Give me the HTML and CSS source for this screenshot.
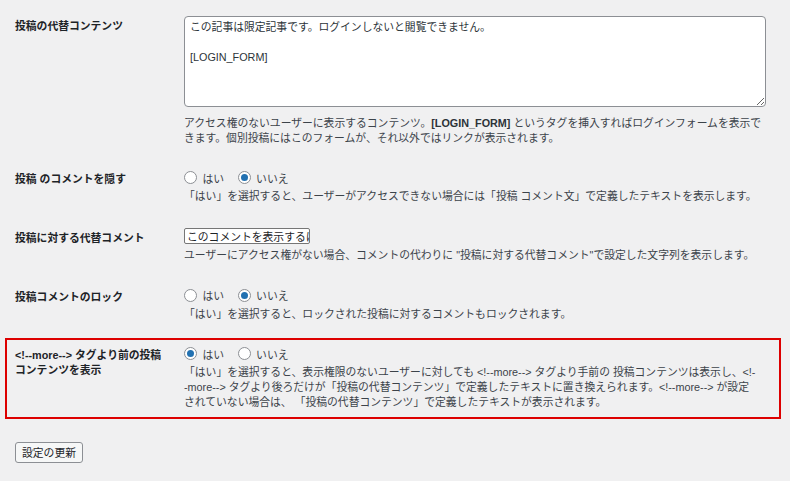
FILE: index.html
```html
<!DOCTYPE html>
<html lang="ja">
<head>
    <meta charset="UTF-8">
    <title>設定</title>
    <link rel="stylesheet" href="styles.css">
</head>
<body>
    <div class="settings">
        <div class="row">
            <div class="label">投稿の代替コンテンツ</div>
            <div class="field">
                <textarea class="large-text" rows="5">この記事は限定記事です。ログインしないと閲覧できません。

[LOGIN_FORM]</textarea>
                <p class="description">アクセス権のないユーザーに表示するコンテンツ。<strong>[LOGIN_FORM]</strong> というタグを挿入すればログインフォームを表示で<br>きます。個別投稿にはこのフォームが、それ以外ではリンクが表示されます。</p>
            </div>
        </div>

        <div class="row">
            <div class="label">投稿 のコメントを隠す</div>
            <div class="field">
                <div class="options">
                    <label><input type="radio" name="hide_comments" value="1">はい</label>
                    <label><input type="radio" name="hide_comments" value="0" checked>いいえ</label>
                </div>
                <p class="description small-gap">「はい」を選択すると、ユーザーがアクセスできない場合には「投稿 コメント文」で定義したテキストを表示します。</p>
            </div>
        </div>

        <div class="row">
            <div class="label">投稿に対する代替コメント</div>
            <div class="field">
                <input type="text" class="text-input" value="このコメントを表示するには">
                <p class="description input-gap">ユーザーにアクセス権がない場合、コメントの代わりに "投稿に対する代替コメント"で設定した文字列を表示します。</p>
            </div>
        </div>

        <div class="row">
            <div class="label">投稿コメントのロック</div>
            <div class="field">
                <div class="options">
                    <label><input type="radio" name="lock_comments" value="1">はい</label>
                    <label><input type="radio" name="lock_comments" value="0" checked>いいえ</label>
                </div>
                <p class="description small-gap">「はい」を選択すると、ロックされた投稿に対するコメントもロックされます。</p>
            </div>
        </div>

        <div class="row highlight">
            <div class="label">&lt;!--more--&gt; タグより前の投稿<br>コンテンツを表示</div>
            <div class="field">
                <div class="options">
                    <label><input type="radio" name="show_more" value="1" checked>はい</label>
                    <label><input type="radio" name="show_more" value="0">いいえ</label>
                </div>
                <p class="description small-gap">「はい」を選択すると、表示権限のないユーザーに対しても &lt;!--more--&gt; タグより手前の 投稿コンテンツは表示し、&lt;!-<br>-more--&gt; タグより後ろだけが「投稿の代替コンテンツ」で定義したテキストに置き換えられます。&lt;!--more--&gt; が設定<br>されていない場合は、 「投稿の代替コンテンツ」で定義したテキストが表示されます。</p>
            </div>
        </div>

        <button class="button">設定の更新</button>
    </div>
</body>
</html>
```

FILE: styles.css
```css
body {
    margin: 0;
    background: #f0f0f1;
    font-family: "Liberation Sans", "Noto Sans CJK JP", sans-serif;
    font-size: 10.8px;
    color: #1d2327;
}

.settings {
    padding: 9px 9px 0 5px;
}

.row {
    display: grid;
    grid-template-columns: 169px 1fr;
    padding: 5px 13px 7px 8px;
    border: 2px solid transparent;
    margin-bottom: 7.5px;
}

.row.highlight {
    border-color: #dd0000;
}

.label {
    padding-top: 3.3px;
    font-weight: 700;
    line-height: 14.5px;
}

.field textarea {
    display: block;
    width: 100%;
    height: 91px;
    box-sizing: border-box;
    margin: 0;
    padding: 2.5px 5px;
    border: 1px solid #8c8f94;
    border-radius: 4px;
    background: #fff;
    color: #2c3338;
    font: inherit;
    line-height: 15px;
}

.description {
    margin: 8.5px 0 0;
    line-height: 15px;
    color: #3c434a;
    white-space: nowrap;
}

.description strong {
    color: #2c3338;
}

.description.small-gap {
    margin-top: 3px;
}

.description.input-gap {
    margin-top: 4px;
}

.options {
    display: flex;
    align-items: center;
    height: 17px;
    color: #3c434a;
}

.options label {
    display: flex;
    align-items: center;
    margin-right: 13.5px;
}

.options input[type="radio"] {
    appearance: none;
    -webkit-appearance: none;
    display: grid;
    place-items: center;
    width: 13px;
    height: 13px;
    box-sizing: border-box;
    margin: 0 5.5px 0 0;
    border: 1px solid #8c8f94;
    border-radius: 50%;
    background: #fff;
}

.options input[type="radio"]:checked::before {
    content: "";
    width: 7px;
    height: 7px;
    border-radius: 50%;
    background: #2271b1;
}

.text-input {
    display: block;
    width: 126px;
    height: 16.5px;
    box-sizing: border-box;
    margin: 0;
    padding: 0 0 0 2px;
    border: 1px solid #767676;
    border-radius: 2px;
    background: #fff;
    color: #1d2327;
    font: inherit;
}

.button {
    margin: 15px 0 0 10px;
    height: 21px;
    padding: 0 6px;
    border: 1px solid #8c8f94;
    border-radius: 3px;
    background: #f6f7f7;
    color: #1d2327;
    font: inherit;
}
```
